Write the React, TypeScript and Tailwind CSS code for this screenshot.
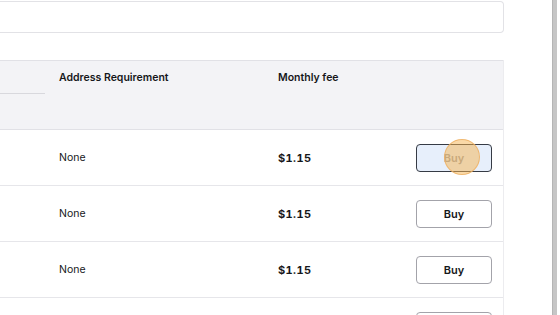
import React from "react";

const rows = [
  { address: "None", fee: "$1.15", active: true },
  { address: "None", fee: "$1.15", active: false },
  { address: "None", fee: "$1.15", active: false },
  { address: "None", fee: "$1.15", active: false },
];

const App = () => {
  return (
    <div className="w-[560px] h-[315px] overflow-hidden bg-white flex font-['Inter',sans-serif] text-[#16171a]">
      {/* Page content */}
      <div className="w-[552px] shrink-0 pr-[48px]">
        <div className="ml-[-20px]">
          {/* Search input */}
          <div className="mt-[1px] h-[32px] border border-l-0 border-[#e2e2e6] rounded-r-[4px] bg-white" />

          {/* Table */}
          <div className="mt-[27px] border-r border-[#ececef]">
            <div className="h-[70px] grid grid-cols-[79px_219px_1fr] bg-[#f3f3f6] border-y border-[#e1e1e6] text-[10.5px] font-semibold leading-[14px]">
              <div>
                <div className="mt-[32px] w-[65px] border-t border-[#d8d8dd]" />
              </div>
              <div className="pt-[10px]">Address Requirement</div>
              <div className="pt-[10px]">Monthly fee</div>
            </div>

            {rows.map((row, i) => (
              <div
                key={i}
                className="h-[56px] grid grid-cols-[79px_219px_1fr_auto] items-center border-b border-[#e6e6ea] text-[10.5px] leading-[14px] pt-[1px]"
              >
                <div />
                <div>{row.address}</div>
                <div className="font-bold text-[11px] tabular-nums tracking-[0.4px]">{row.fee}</div>
                <div className="pr-[11px] relative">
                  {row.active ? (
                    <>
                      <button className="w-[76px] h-[28px] rounded-[4px] border border-[#363b45] bg-[#e7effb] text-[#9a9ea8] font-semibold text-[11px]">
                        Buy
                      </button>
                      <span className="absolute left-[28px] top-[-5px] w-[36px] h-[36px] rounded-full bg-[#f5b450]/50 border border-[#efb063]/80" />
                    </>
                  ) : (
                    <button className="w-[76px] h-[28px] rounded-[4px] border border-[#a3a3aa] bg-white font-semibold text-[11px]">
                      Buy
                    </button>
                  )}
                </div>
              </div>
            ))}
          </div>
        </div>
      </div>

      {/* Scrollbar */}
      <div className="w-[5px] shrink-0 bg-[#c6c6c6] border-l border-[#b5b5b5]" />
      <div className="flex-1 bg-white" />
    </div>
  );
};

export default App;
